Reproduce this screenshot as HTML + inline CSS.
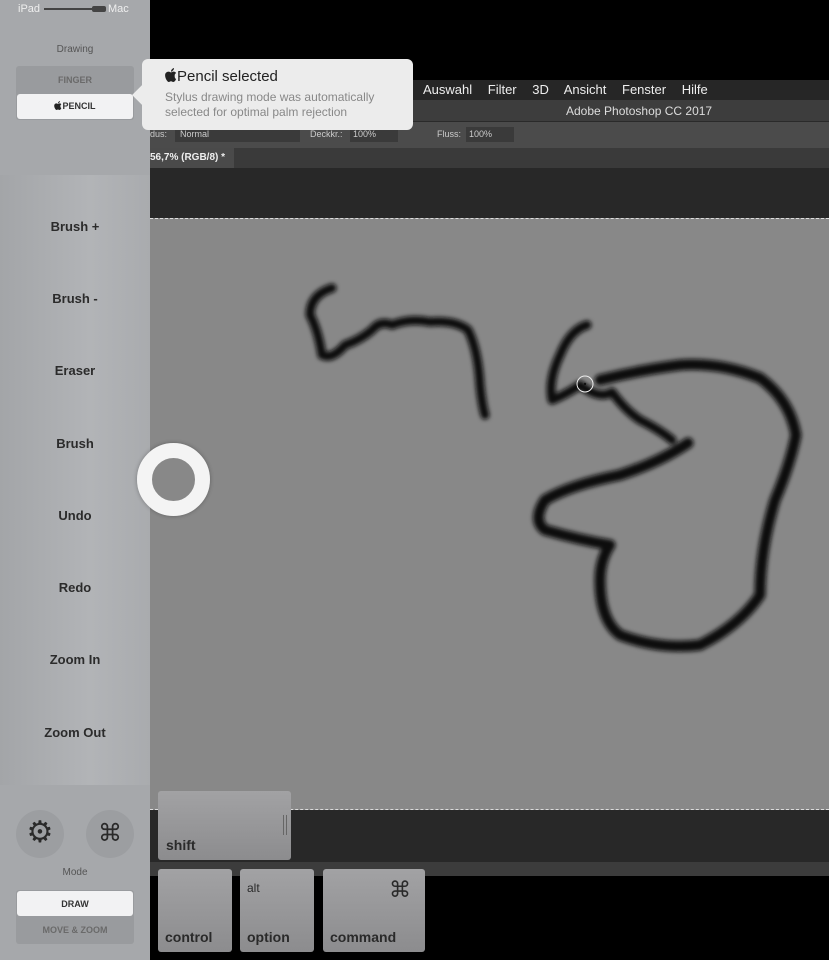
<!DOCTYPE html>
<html><head><meta charset="utf-8"><style>
*{margin:0;padding:0;box-sizing:border-box}
body{width:829px;height:960px;background:#000;position:relative;overflow:hidden;font-family:"Liberation Sans",sans-serif}
.a{position:absolute}
.side{left:0;top:0;width:150px;height:960px;background:linear-gradient(90deg,#a3a5a8,#b2b4b7 60%,#a9abae)}
.btn{left:0;width:150px;text-align:center;font-weight:bold;font-size:13px;color:#2b2b2b}
.key{background:linear-gradient(#a2a2a4,#8c8c8e);border-radius:3px;color:#2a2a2a;font-weight:bold;font-size:14px}
</style></head><body>
<div class="a" style="left:150px;top:80px;width:679px;height:20px;background:#262626"></div>
<div class="a" style="left:423px;top:82px;color:#eee;font-size:13px;word-spacing:12px">Auswahl Filter 3D Ansicht Fenster Hilfe</div>
<div class="a" style="left:150px;top:100px;width:679px;height:22px;background:#3d3d3d;border-bottom:1px solid #2a2a2a"></div>
<div class="a" style="left:566px;top:104px;color:#ddd;font-size:12px">Adobe Photoshop CC 2017</div>
<div class="a" style="left:150px;top:122px;width:679px;height:26px;background:#4b4b4b"></div>
<div class="a" style="left:150px;top:129px;color:#ccc;font-size:9px">dus:</div>
<div class="a" style="left:175px;top:127px;width:125px;height:15px;background:#3a3a3a;color:#ccc;font-size:9px;padding:2px 5px">Normal</div>
<div class="a" style="left:310px;top:129px;color:#ccc;font-size:9px">Deckkr.:</div>
<div class="a" style="left:350px;top:127px;width:48px;height:15px;background:#3a3a3a;color:#ccc;font-size:9px;padding:2px 3px">100%</div>
<div class="a" style="left:437px;top:129px;color:#ccc;font-size:9px">Fluss:</div>
<div class="a" style="left:466px;top:127px;width:48px;height:15px;background:#3a3a3a;color:#ccc;font-size:9px;padding:2px 3px">100%</div>
<div class="a" style="left:150px;top:148px;width:679px;height:20px;background:#3a3a3a"></div>
<div class="a" style="left:150px;top:148px;width:84px;height:20px;background:#4a4a4a;color:#eee;font-size:10px;font-weight:bold;padding:4px 0 0 0">56,7% (RGB/8) *</div>
<div class="a" style="left:150px;top:168px;width:679px;height:50px;background:#282828"></div>
<div class="a" style="left:150px;top:218px;width:679px;height:592px;background:#888;border-top:1px dashed #ddd;border-bottom:1px dashed #ddd"></div>
<div class="a" style="left:150px;top:810px;width:679px;height:52px;background:#282828"></div>
<div class="a" style="left:150px;top:862px;width:679px;height:14px;background:#3c3c3c"></div>
<svg class="a" style="left:0;top:0" width="829" height="960">
<defs><filter id="b"><feGaussianBlur stdDeviation="2.2"/></filter></defs>
<g fill="none" stroke="#111" stroke-linecap="round" stroke-linejoin="round" filter="url(#b)">
<path stroke-width="9" d="M332 288 Q310 295 310 315 Q318 330 322 355 Q332 360 345 345 Q360 340 372 330 Q380 320 392 325 Q410 318 430 322 Q455 320 468 330 Q478 350 480 385 Q482 405 485 415"/>
<path stroke-width="9" d="M587 325 Q570 330 560 355 Q548 380 552 400 Q565 395 580 385 Q600 400 612 392 Q625 410 640 420 Q660 430 672 440"/>
<path stroke-width="11" d="M600 380 Q640 370 680 365 Q720 362 760 378 Q790 400 796 435 Q790 465 775 500 Q760 550 760 595 Q740 625 700 645 Q660 650 620 635 Q600 620 600 580 Q600 560 610 545 Q580 540 545 530 Q532 520 545 500 Q570 485 620 475 Q660 462 688 443"/>
</g>
<circle cx="585" cy="384" r="8" fill="none" stroke="#eee" stroke-width="1"/>
<circle cx="585" cy="384" r="1.2" fill="#111"/>
</svg>
<div class="a side"></div>
<div class="a" style="left:0;top:0;width:150px;height:175px;background:#a6a8ab"></div>
<div class="a" style="left:0;top:785px;width:150px;height:175px;background:#a6a8ab"></div>
<div class="a" style="left:18px;top:3px;color:#eee;font-size:11px">iPad</div>
<div class="a" style="left:44px;top:8px;width:50px;height:2px;background:#444"></div>
<div class="a" style="left:92px;top:6px;width:14px;height:6px;background:#444;border-radius:2px"></div>
<div class="a" style="left:108px;top:3px;color:#eee;font-size:11px">Mac</div>
<div class="a" style="left:0;top:44px;width:150px;text-align:center;color:#555;font-size:10px">Drawing</div>
<div class="a" style="left:16px;top:66px;width:118px;height:54px;background:#999b9e;border-radius:3px"></div>
<div class="a" style="left:16px;top:75px;width:118px;text-align:center;color:#6a6a6a;font-size:9px;font-weight:bold">FINGER</div>
<div class="a" style="left:17px;top:94px;width:116px;height:25px;background:#f2f2f3;border-radius:3px;text-align:center;font-size:9px;font-weight:bold;color:#333;padding-top:7px"><svg width="8" height="9" viewBox="0 0 16 19" style="vertical-align:-1px"><path fill="#222" d="M13 10c0-2 2-3 2-3-1-2-3-2-4-2s-2 1-3 1-2-1-3-1C2 5 0 7 0 10c0 4 3 9 5 9 1 0 2-1 3-1s2 1 3 1c2 0 3-2 4-4-2-1-2-3-2-5zM11 3c1-1 1-2 1-3-1 0-2 1-3 2-1 1-1 2-1 3 1 0 2-1 3-2z"/></svg>PENCIL</div>
<div class="a btn" style="top:219px">Brush +</div>
<div class="a btn" style="top:291px">Brush -</div>
<div class="a btn" style="top:363px">Eraser</div>
<div class="a btn" style="top:436px">Brush</div>
<div class="a btn" style="top:508px">Undo</div>
<div class="a btn" style="top:580px">Redo</div>
<div class="a btn" style="top:652px">Zoom In</div>
<div class="a btn" style="top:725px">Zoom Out</div>
<div class="a" style="left:16px;top:810px;width:48px;height:48px;border-radius:50%;background:#9c9ea1;text-align:center;font-size:30px;line-height:46px;color:#2a2a2a">⚙</div>
<div class="a" style="left:86px;top:810px;width:48px;height:48px;border-radius:50%;background:#9c9ea1;text-align:center;font-size:24px;line-height:48px;color:#2a2a2a">⌘</div>
<div class="a" style="left:0;top:867px;width:150px;text-align:center;color:#555;font-size:10px">Mode</div>
<div class="a" style="left:16px;top:890px;width:118px;height:54px;background:#999b9e;border-radius:3px"></div>
<div class="a" style="left:17px;top:891px;width:116px;height:25px;background:#f2f2f3;border-radius:3px;text-align:center;font-size:9px;font-weight:bold;color:#333;padding-top:8px">DRAW</div>
<div class="a" style="left:16px;top:925px;width:118px;text-align:center;color:#6a6a6a;font-size:9px;font-weight:bold">MOVE &amp; ZOOM</div>
<div class="a" style="left:137px;top:443px;width:73px;height:73px;border-radius:50%;border:15px solid #f4f4f4;box-shadow:0 0 4px rgba(0,0,0,.3)"></div>
<div class="a" style="left:135px;top:88px;width:14px;height:14px;background:#ececec;transform:rotate(45deg)"></div>
<div class="a" style="left:142px;top:59px;width:271px;height:71px;background:#ececec;border-radius:6px"></div>
<div class="a" style="left:165px;top:68px;font-size:15px;color:#222"><svg width="12" height="14" viewBox="0 0 16 19" style="vertical-align:-1px"><path fill="#222" d="M13 10c0-2 2-3 2-3-1-2-3-2-4-2s-2 1-3 1-2-1-3-1C2 5 0 7 0 10c0 4 3 9 5 9 1 0 2-1 3-1s2 1 3 1c2 0 3-2 4-4-2-1-2-3-2-5zM11 3c1-1 1-2 1-3-1 0-2 1-3 2-1 1-1 2-1 3 1 0 2-1 3-2z"/></svg>Pencil selected</div>
<div class="a" style="left:165px;top:90px;font-size:12px;color:#888;line-height:15px">Stylus drawing mode was automatically<br>selected for optimal palm rejection</div>
<div class="a key" style="left:158px;top:791px;width:133px;height:69px"><span class="a" style="left:8px;top:46px">shift</span><span class="a" style="left:125px;top:24px;width:4px;height:20px;border-left:1px solid #666;border-right:1px solid #666"></span></div>
<div class="a key" style="left:158px;top:869px;width:74px;height:83px"><span class="a" style="left:7px;top:60px">control</span></div>
<div class="a key" style="left:240px;top:869px;width:74px;height:83px"><span class="a" style="left:7px;top:12px;font-weight:normal;font-size:12px">alt</span><span class="a" style="left:7px;top:60px">option</span></div>
<div class="a key" style="left:323px;top:869px;width:102px;height:83px"><span class="a" style="left:66px;top:8px;font-weight:normal;font-size:22px">⌘</span><span class="a" style="left:7px;top:60px">command</span></div>
</body></html>
